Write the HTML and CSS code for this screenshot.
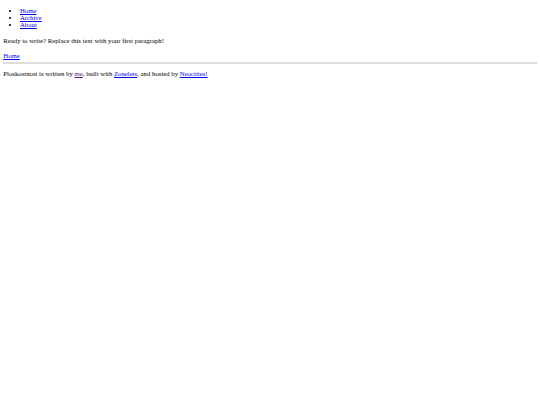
FILE: index.html
```html
<!DOCTYPE html>
<html>
<head>
<meta charset="utf-8">
<link rel="stylesheet" href="styles.css">
</head>
<body>
<ul class="nav">
<li><a href="#">Home</a></li>
<li><a href="#">Archive</a></li>
<li><a href="#">About</a></li>
</ul>
<p class="para">Ready to write? Replace this text with your first paragraph!</p>
<a class="back" href="#">Home</a>
<hr class="rule">
<p class="footer">Ploskostnost is written by <a class="visited" href="#">me</a>, built with <a href="#">Zonelets</a>, and hosted by <a href="#">Neocities!</a></p>
</body>
</html>
```
FILE: styles.css
```css
html, body {
  margin: 0;
  padding: 0;
}
body {
  padding: 0 3.3px;
  font-family: "Liberation Serif", serif;
  font-size: 6.76px;
  line-height: 7.3px;
  color: #000;
}
a {
  color: #0000ee;
}
a.visited {
  color: #551a8b;
}
.nav {
  margin: 0;
  padding: 6.5px 0 0 16.7px;
  line-height: 7.3px;
}
.para {
  margin: 9px 0 7px;
}
.back {
  display: block;
}
.rule {
  margin: 3.5px 0 0;
  border: 0;
  height: 2px;
  background: #dcdcdc;
}
.footer {
  margin: 6px 0 0;
}
```
